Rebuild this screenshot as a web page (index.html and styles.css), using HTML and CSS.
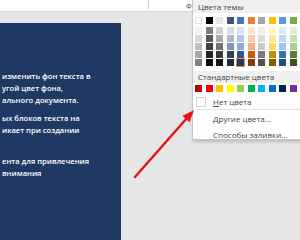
FILE: index.html
```html
<!DOCTYPE html>
<html lang="ru">
<head>
<meta charset="utf-8">
<link rel="stylesheet" href="styles.css">
</head>
<body>
<div class="screen">
  <div class="ribbon">
    <span class="ribbon-sep"></span>
    <span class="ribbon-label">Ф</span>
  </div>
  <div class="workspace">
    <div class="slide">
      <p class="para p1">изменить фон текста в<br>угой цвет фона,<br>ального документа.</p>
      <p class="para p2">ых блоков текста на<br>икает при создании</p>
      <p class="para p3">ента для привлечения<br>внимания</p>
    </div>
  </div>

  <div class="menu">
    <div class="menu-head">Цвета темы</div>
    <div class="row top-row">
      <span class="sw" style="background:#ffffff" data-b="1"></span>
      <span class="sw" style="background:#000000"></span>
      <span class="sw" style="background:#e7e6e6"></span>
      <span class="sw" style="background:#44546a"></span>
      <span class="sw" style="background:#4472c4"></span>
      <span class="sw" style="background:#ed7d31"></span>
      <span class="sw" style="background:#a5a5a5"></span>
      <span class="sw" style="background:#ffc000"></span>
      <span class="sw" style="background:#5b9bd5"></span>
      <span class="sw" style="background:#70ad47"></span>
    </div>
    <div class="row shades">
      <div class="col"><span style="background:#f2f2f2"></span><span style="background:#d9d9d9"></span><span style="background:#bfbfbf"></span><span style="background:#a6a6a6"></span><span style="background:#808080"></span></div>
      <div class="col"><span style="background:#7f7f7f"></span><span style="background:#595959"></span><span style="background:#404040"></span><span style="background:#262626"></span><span style="background:#0d0d0d"></span></div>
      <div class="col"><span style="background:#d0cece"></span><span style="background:#aeaaaa"></span><span style="background:#757171"></span><span style="background:#3a3838"></span><span style="background:#171616"></span></div>
      <div class="col"><span style="background:#d6dce4"></span><span style="background:#adb9ca"></span><span style="background:#8497b0"></span><span style="background:#333f4f"></span><span style="background:#222a35"></span></div>
      <div class="col"><span style="background:#d9e1f2"></span><span style="background:#b4c6e7"></span><span style="background:#8ea9db"></span><span style="background:#2f5597"></span><span class="selected" style="background:#1f3864"></span></div>
      <div class="col"><span style="background:#fbe5d6"></span><span style="background:#f8cbad"></span><span style="background:#f4b183"></span><span style="background:#c55a11"></span><span style="background:#843c0c"></span></div>
      <div class="col"><span style="background:#ededed"></span><span style="background:#dbdbdb"></span><span style="background:#c9c9c9"></span><span style="background:#7b7b7b"></span><span style="background:#525252"></span></div>
      <div class="col"><span style="background:#fff2cc"></span><span style="background:#ffe699"></span><span style="background:#ffd966"></span><span style="background:#bf9000"></span><span style="background:#7f6000"></span></div>
      <div class="col"><span style="background:#ddebf7"></span><span style="background:#bdd7ee"></span><span style="background:#9dc3e6"></span><span style="background:#2e75b6"></span><span style="background:#1f4e79"></span></div>
      <div class="col"><span style="background:#e2efda"></span><span style="background:#c6e0b4"></span><span style="background:#a9d18e"></span><span style="background:#548235"></span><span style="background:#375623"></span></div>
    </div>
    <div class="menu-head std-head">Стандартные цвета</div>
    <div class="row std-row">
      <span class="sw" style="background:#c00000"></span>
      <span class="sw" style="background:#ff0000"></span>
      <span class="sw" style="background:#ffc000"></span>
      <span class="sw" style="background:#ffff00"></span>
      <span class="sw" style="background:#92d050"></span>
      <span class="sw" style="background:#00b050"></span>
      <span class="sw" style="background:#00b0f0"></span>
      <span class="sw" style="background:#0070c0"></span>
      <span class="sw" style="background:#002060"></span>
      <span class="sw" style="background:#7030a0"></span>
    </div>
    <div class="item no-color">
      <span class="nobox"></span>
      <span class="item-text"><u>Н</u>ет цвета</span>
    </div>
    <div class="divider"></div>
    <div class="item"><span class="item-text"><u>Д</u>ругие цвета...</span></div>
    <div class="item"><span class="item-text">Способы заливки...</span></div>
  </div>

  <svg class="arrow" width="300" height="240" viewBox="0 0 300 240">
    <line x1="135" y1="177" x2="187" y2="118" stroke="#e31414" stroke-width="2.4" stroke-linecap="round"/>
    <polygon points="194,110 182.4,116 189.6,122.2" fill="#e31414"/>
  </svg>
</div>
</body>
</html>
```
FILE: styles.css
```css
html, body {
  margin: 0;
  padding: 0;
}
body {
  font-family: "Open Sans", "Liberation Sans", sans-serif;
  background: #e6e6e6;
}
.screen {
  position: relative;
  width: 300px;
  height: 240px;
  overflow: hidden;
  background: #e6e6e6;
}
.ribbon {
  height: 11px;
  background: #ffffff;
  border-bottom: 1px solid #d4d4d4;
  display: flex;
  align-items: flex-start;
}
.ribbon-sep {
  width: 1px;
  height: 9px;
  margin-left: 148px;
  background: #c8c8c8;
}
.ribbon-label {
  margin-left: 37px;
  font-size: 7px;
  line-height: 7px;
  margin-top: 3px;
  color: #444;
}
.workspace {
  padding-top: 11px;
  height: 217px;
}
.slide {
  width: 121px;
  height: 100%;
  background: #203864;
  padding: 47px 0 0 2px;
  box-sizing: border-box;
  color: #ffffff;
  font-size: 7.6px;
  font-weight: 600;
  line-height: 12px;
  white-space: nowrap;
}
.para {
  margin: 0;
}
.p2 {
  margin-top: 6px;
}
.p3 {
  margin-top: 19px;
}

.menu {
  position: absolute;
  left: 192px;
  top: 0;
  width: 115px;
  height: 139px;
  background: #ffffff;
  border-left: 1px solid #c6c6c6;
  border-bottom: 1px solid #c6c6c6;
  box-shadow: 1px 2px 3px rgba(0,0,0,0.18);
  color: #444;
  font-size: 8px;
}
.menu-head {
  height: 13px;
  line-height: 13px;
  background: #f0f0f0;
  padding-left: 5px;
  color: #444;
}
.row {
  display: flex;
  gap: 3.5px;
  padding-left: 2px;
}
.top-row {
  margin-top: 4px;
}
.sw {
  width: 7px;
  height: 7px;
  flex: none;
}
.sw[data-b] {
  box-shadow: inset 0 0 0 1px #e2e2e2;
}
.shades {
  margin-top: 3px;
}
.col {
  display: flex;
  flex-direction: column;
  gap: 1px;
  width: 7px;
  flex: none;
}
.col span {
  height: 7px;
}
.col .selected {
  box-shadow: 0 0 0 1px #f0883e;
}
.std-head {
  margin-top: 5px;
  height: 12px;
  line-height: 12px;
}
.std-row {
  margin-top: 2px;
}
.item {
  display: flex;
  align-items: center;
  height: 16px;
  padding-left: 20px;
}
.no-color {
  margin-top: 4px;
  padding-left: 3px;
  height: 11px;
}
.nobox {
  width: 8px;
  height: 8px;
  border: 1px solid #d4d4d4;
  background: #fff;
  margin-right: 7px;
}
.item-text u {
  text-decoration: underline;
  text-underline-offset: 1px;
}
.divider {
  height: 1px;
  background: #e0e0e0;
  margin: 2px 0 0 4px;
}
.arrow {
  position: absolute;
  left: 0;
  top: 0;
  pointer-events: none;
}
```
